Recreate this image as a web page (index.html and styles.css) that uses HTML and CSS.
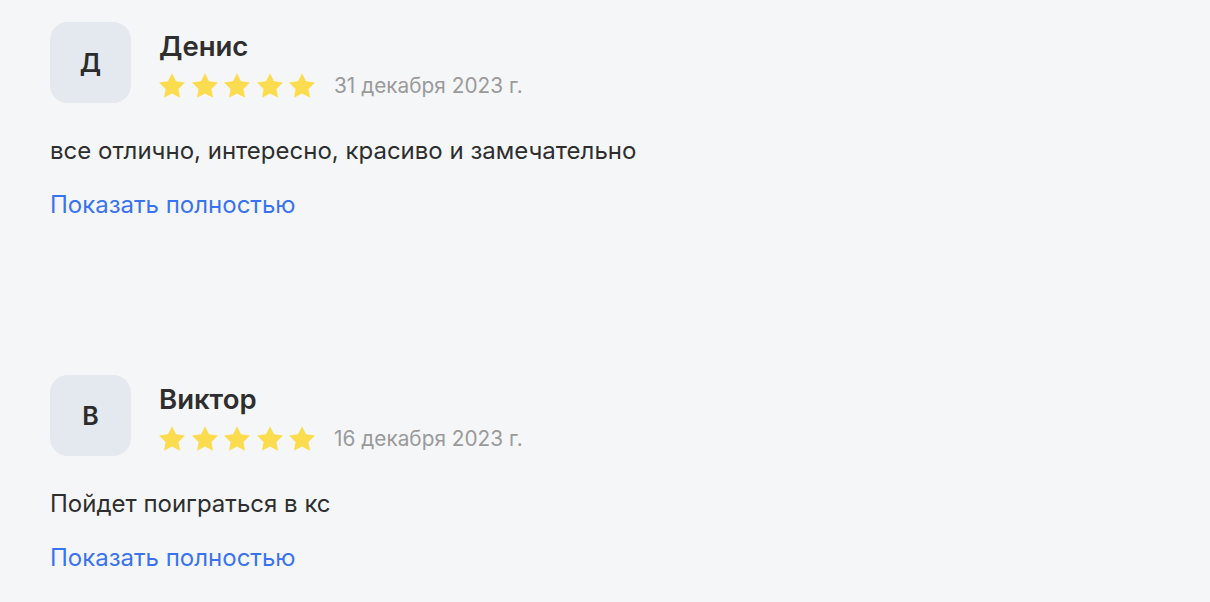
FILE: index.html
```html
<!DOCTYPE html>
<html>
<head>
    <meta charset="UTF-8">
    <title>Отзывы</title>
    <link rel="stylesheet" href="styles.css">
</head>
<body>
    <div class="reviews">
        <div class="review">
            <div class="review-head">
                <div class="avatar">Д</div>
                <div class="review-meta">
                    <div class="review-name">Денис</div>
                    <div class="review-rating">
                        <div class="stars">
                            <svg class="star" viewBox="1.7 1.6 20.6 19.6"><path d="M12 1.6l3.2 6.5 7.1 1-5.2 5 1.3 7.1L12 17.8l-6.4 3.4 1.3-7.1-5.2-5 7.1-1z"/></svg>
                            <svg class="star" viewBox="1.7 1.6 20.6 19.6"><path d="M12 1.6l3.2 6.5 7.1 1-5.2 5 1.3 7.1L12 17.8l-6.4 3.4 1.3-7.1-5.2-5 7.1-1z"/></svg>
                            <svg class="star" viewBox="1.7 1.6 20.6 19.6"><path d="M12 1.6l3.2 6.5 7.1 1-5.2 5 1.3 7.1L12 17.8l-6.4 3.4 1.3-7.1-5.2-5 7.1-1z"/></svg>
                            <svg class="star" viewBox="1.7 1.6 20.6 19.6"><path d="M12 1.6l3.2 6.5 7.1 1-5.2 5 1.3 7.1L12 17.8l-6.4 3.4 1.3-7.1-5.2-5 7.1-1z"/></svg>
                            <svg class="star" viewBox="1.7 1.6 20.6 19.6"><path d="M12 1.6l3.2 6.5 7.1 1-5.2 5 1.3 7.1L12 17.8l-6.4 3.4 1.3-7.1-5.2-5 7.1-1z"/></svg>
                        </div>
                        <span class="review-date">31 декабря 2023 г.</span>
                    </div>
                </div>
            </div>
            <p class="review-text">все отлично, интересно, красиво и замечательно</p>
            <a href="#" class="show-more">Показать полностью</a>
        </div>

        <div class="review">
            <div class="review-head">
                <div class="avatar">В</div>
                <div class="review-meta">
                    <div class="review-name">Виктор</div>
                    <div class="review-rating">
                        <div class="stars">
                            <svg class="star" viewBox="1.7 1.6 20.6 19.6"><path d="M12 1.6l3.2 6.5 7.1 1-5.2 5 1.3 7.1L12 17.8l-6.4 3.4 1.3-7.1-5.2-5 7.1-1z"/></svg>
                            <svg class="star" viewBox="1.7 1.6 20.6 19.6"><path d="M12 1.6l3.2 6.5 7.1 1-5.2 5 1.3 7.1L12 17.8l-6.4 3.4 1.3-7.1-5.2-5 7.1-1z"/></svg>
                            <svg class="star" viewBox="1.7 1.6 20.6 19.6"><path d="M12 1.6l3.2 6.5 7.1 1-5.2 5 1.3 7.1L12 17.8l-6.4 3.4 1.3-7.1-5.2-5 7.1-1z"/></svg>
                            <svg class="star" viewBox="1.7 1.6 20.6 19.6"><path d="M12 1.6l3.2 6.5 7.1 1-5.2 5 1.3 7.1L12 17.8l-6.4 3.4 1.3-7.1-5.2-5 7.1-1z"/></svg>
                            <svg class="star" viewBox="1.7 1.6 20.6 19.6"><path d="M12 1.6l3.2 6.5 7.1 1-5.2 5 1.3 7.1L12 17.8l-6.4 3.4 1.3-7.1-5.2-5 7.1-1z"/></svg>
                        </div>
                        <span class="review-date">16 декабря 2023 г.</span>
                    </div>
                </div>
            </div>
            <p class="review-text">Пойдет поиграться в кс</p>
            <a href="#" class="show-more">Показать полностью</a>
        </div>
    </div>
</body>
</html>
```

FILE: styles.css
```css
body {
    font-family: Inter, Roboto, "Liberation Sans", sans-serif;
    margin: 0;
    padding: 0;
    background-color: #f5f6f8;
    color: #2e2e2e;
}

.reviews {
    padding: 22px 50px 0;
}

.review {
    height: 353px;
}

/* Header: avatar + name + rating */
.review-head {
    display: flex;
    gap: 28px;
}

.avatar {
    width: 81px;
    height: 81px;
    border-radius: 18px;
    background-color: #e4e8ef;
    display: flex;
    align-items: center;
    justify-content: center;
    font-size: 25px;
    font-weight: 600;
    color: #2b2b2b;
    flex-shrink: 0;
}

.review-meta {
    padding-top: 8px;
}

.review-name {
    font-size: 27.5px;
    line-height: 32px;
    font-weight: 600;
}

.review-rating {
    display: flex;
    align-items: center;
    margin-top: 11px;
}

.stars {
    display: flex;
    gap: 6.5px;
}

.star {
    width: 26px;
    height: 25px;
    fill: #fcdc4f;
}

.review-date {
    margin-left: 19px;
    font-size: 20.8px;
    line-height: 24px;
    color: #9a9a9a;
}

.review-text {
    margin: 32px 0 0;
    font-size: 24px;
    line-height: 32px;
}

.show-more {
    display: inline-block;
    margin-top: 22px;
    font-size: 24px;
    line-height: 32px;
    color: #3a73ef;
    text-decoration: none;
}
```
